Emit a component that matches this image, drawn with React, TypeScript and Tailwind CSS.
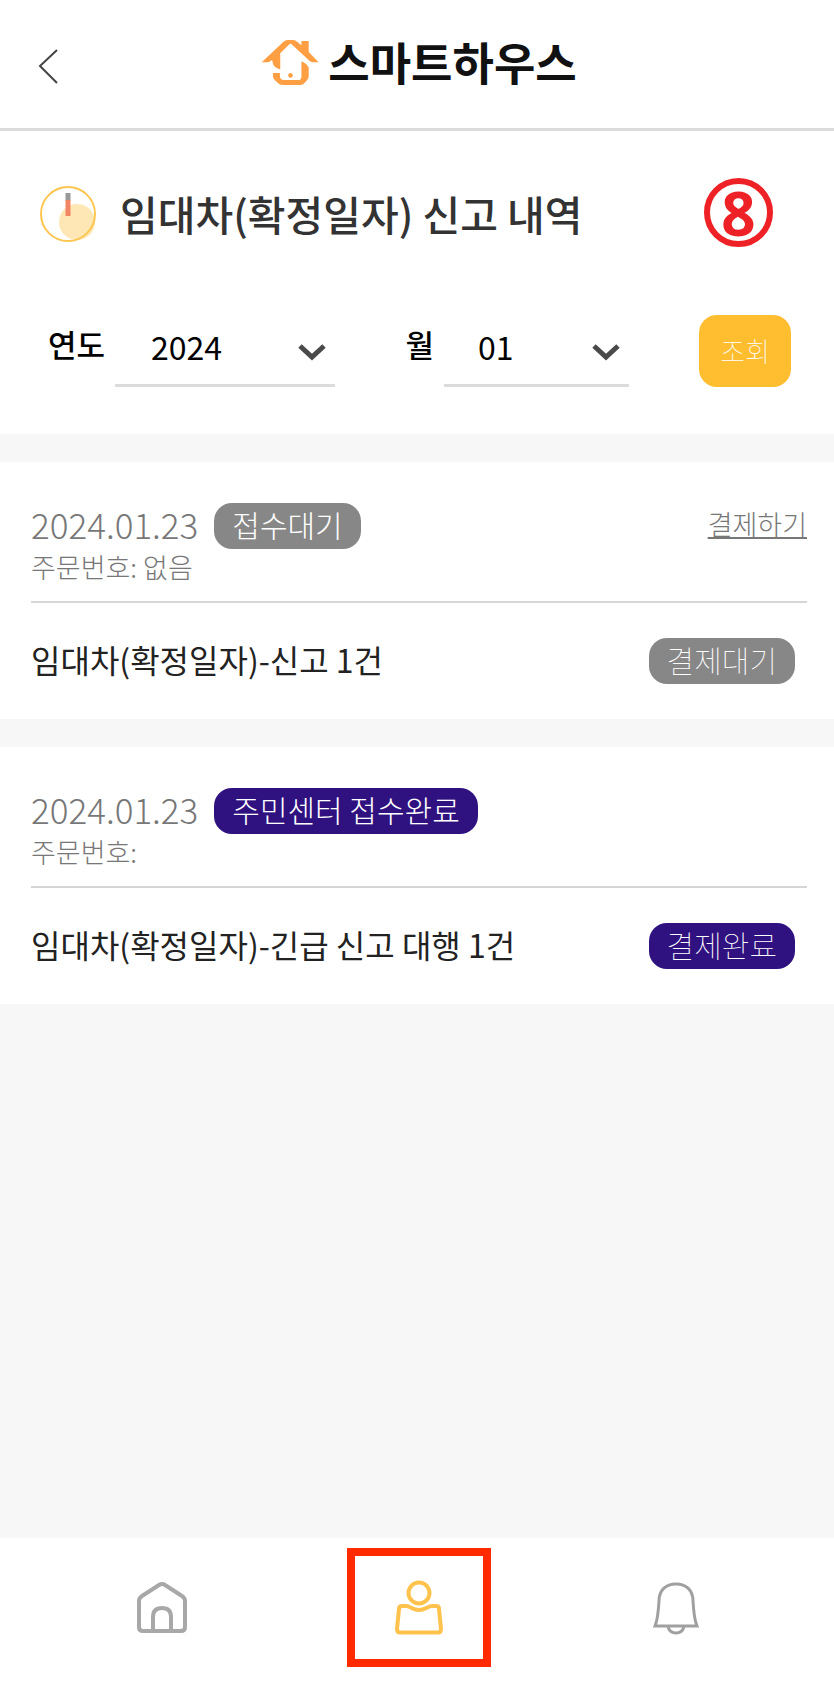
import React from "react";

type Tone = "gray" | "navy";

interface Order {
  date: string;
  status: string;
  orderNo: string;
  item: string;
  payment: string;
  tone: Tone;
  payable: boolean;
}

const orders: Order[] = [
  {
    date: "2024.01.23",
    status: "접수대기",
    orderNo: "없음",
    item: "임대차(확정일자)-신고 1건",
    payment: "결제대기",
    tone: "gray",
    payable: true,
  },
  {
    date: "2024.01.23",
    status: "주민센터 접수완료",
    orderNo: "",
    item: "임대차(확정일자)-긴급 신고 대행 1건",
    payment: "결제완료",
    tone: "navy",
    payable: false,
  },
];

const toneClass: Record<Tone, string> = {
  gray: "bg-[#878787]",
  navy: "bg-[#2f117f]",
};

function LogoMark() {
  return (
    <svg viewBox="786 118 176 142" className="h-[47px] w-[59px]" aria-hidden="true">
      <g fill="#ff9f43">
        <path d="M787 188 L852 127 Q858 121 866 121 H882 Q889 121 894 126 L907 137 V124 H929 V157 L959 188 H941 Q935 188 931 184 L879 135 Q874 130 869 135 L843 161 V210 Q822 204 820 188 Q820 182 817 182 Q811 188 803 188 Z" />
        <path d="M907 185 Q924 191 929 205 V230 Q929 238 924 243 L914 253 Q909 257 902 257 H849 Q842 257 837 252 L826 242 Q821 237 821 230 V221 H842 V229 Q842 242 855 242 H897 Q907 242 907 231 Z" />
        <circle cx="874" cy="228" r="7" />
      </g>
    </svg>
  );
}

function ClockIcon() {
  return (
    <svg viewBox="0 0 58 58" className="mt-1 h-[58px] w-[58px]" aria-hidden="true">
      <circle cx="37" cy="36" r="18" fill="#ffe7b5" />
      <circle cx="28" cy="28" r="27" fill="none" stroke="#fdc650" strokeWidth="2" />
      <path d="M28 7V15" stroke="#999" strokeWidth="5" />
      <path d="M28 14V30" stroke="#f28563" strokeWidth="5" />
    </svg>
  );
}

function Chevron() {
  return (
    <svg
      viewBox="0 0 30 20"
      className="pointer-events-none absolute right-2 top-9 h-5 w-[30px]"
      fill="none"
      stroke="#4a4a4a"
      strokeWidth="5"
      aria-hidden="true"
    >
      <path d="M3 3 L15 14 L27 3" />
    </svg>
  );
}

function Picker({ id, options, pad }: { id: string; options: string[]; pad: string }) {
  return (
    <div className="relative">
      <select
        id={id}
        className={`h-20 w-full appearance-none rounded-none border-b-3 border-[#dcdcdc] bg-transparent text-[32px] text-black outline-none ${pad}`}
      >
        {options.map((o) => (
          <option key={o}>{o}</option>
        ))}
      </select>
      <Chevron />
    </div>
  );
}

function Badge({ tone, thin, children }: { tone: Tone; thin?: boolean; children: React.ReactNode }) {
  return (
    <span
      className={`flex h-[46px] shrink-0 items-center rounded-[18px] px-[18px] pb-1 text-[30px] leading-none whitespace-nowrap text-white ${toneClass[tone]} ${thin ? "font-thin" : "font-light"}`}
    >
      {children}
    </span>
  );
}

function OrderCard({ order }: { order: Order }) {
  return (
    <article className="bg-white pr-[27px] pl-[31px]">
      <header className="border-b-2 border-[#d6d6d6] pt-[41px] pb-4">
        <div className="flex items-center">
          <time className="mr-4 pb-1 text-[35px] leading-[42px] font-light text-[#777]">{order.date}</time>
          <Badge tone={order.tone}>{order.status}</Badge>
          {order.payable && (
            <a href="#pay" className="ml-auto pb-1 text-[27px] leading-9 font-light text-[#777] underline">
              결제하기
            </a>
          )}
        </div>
        <p className="text-[27px] leading-9 font-light text-[#777]">주문번호: {order.orderNo}</p>
      </header>
      <div className="flex items-center justify-between py-[35px] pr-3">
        <h2 className="pb-1 text-[32px] leading-[42px] text-[#222]">{order.item}</h2>
        <Badge tone={order.tone} thin>
          {order.payment}
        </Badge>
      </div>
    </article>
  );
}

export default function App() {
  return (
    <div className="flex min-h-screen flex-col bg-[#f7f7f7] font-['Noto_Sans_CJK_KR',sans-serif]">
      <header className="grid grid-cols-[1fr_auto_1fr] items-center border-b-3 border-[#dcdcdc] bg-white px-9 py-[34px]">
        <button type="button" aria-label="뒤로" className="mt-1 justify-self-start">
          <svg viewBox="0 0 24 40" className="h-10 w-6" fill="none" stroke="#444" strokeWidth="2" aria-hidden="true">
            <path d="M21 4 L4 20 L21 37" />
          </svg>
        </button>
        <a href="#home" className="flex items-center gap-2 pb-1 pl-1 text-[#111]">
          <LogoMark />
          <span className="text-[45px] leading-[56px] font-bold">스마트하우스</span>
        </a>
      </header>

      <main className="flex flex-col gap-7">
        <section className="bg-white pt-[47px] pb-[47px]">
          <div className="flex items-center pr-[61px] pl-10">
            <ClockIcon />
            <h1 className="ml-[22px] text-[41px] leading-[60px] font-medium text-[#333]">임대차(확정일자) 신고 내역</h1>
            <span className="ml-auto flex size-[69px] items-center justify-center rounded-full border-6 border-[#ee2226] font-['Open_Sans',sans-serif] text-[60px] leading-none font-bold text-[#ee2226]">
              8
            </span>
          </div>
          <form
            className="mt-[60px] grid grid-cols-[auto_220fr_auto_185fr_auto] items-end pr-[43px] pl-12"
            onSubmit={(e) => e.preventDefault()}
          >
            <label htmlFor="year" className="mr-[10px] pb-5 text-[31px] leading-[46px] font-medium text-black">
              연도
            </label>
            <Picker id="year" options={["2024", "2023"]} pad="pl-9" />
            <label htmlFor="month" className="mr-[10px] ml-[70px] pb-5 text-[31px] leading-[46px] font-medium text-black">
              월
            </label>
            <Picker id="month" options={["01", "02", "03"]} pad="pl-[34px]" />
            <button
              type="submit"
              className="ml-[70px] h-[72px] rounded-[18px] bg-[#ffbd30] px-[21px] text-[27px] font-thin text-white"
            >
              조회
            </button>
          </form>
        </section>
        {orders.map((o) => (
          <OrderCard key={o.status} order={o} />
        ))}
      </main>

      <nav className="mt-auto grid grid-cols-3 justify-items-center bg-white pt-[10px] pr-[30px] pb-[25px] pl-[34px]">
        <a href="#home" aria-label="홈" className="flex h-[119px] w-36 items-center justify-center">
          <svg viewBox="0 0 52 54" className="h-[54px] w-[52px]" fill="none" stroke="#a8a8a8" strokeWidth="4" strokeLinejoin="round" aria-hidden="true">
            <path d="M3 20 Q3 17 6 15 L23 4 Q26 2 29 4 L46 15 Q49 17 49 20 V46 Q49 50 45 50 H7 Q3 50 3 46 Z" />
            <path d="M17 50 V36 Q17 27 26 27 Q35 27 35 36 V50" />
          </svg>
        </a>
        <a href="#my" aria-label="내 정보" className="flex h-[119px] w-36 items-center justify-center border-8 border-[#ff2a00]">
          <svg viewBox="0 0 50 58" className="h-[58px] w-[50px]" fill="none" stroke="#ffc34d" strokeWidth="4" strokeLinejoin="round" aria-hidden="true">
            <circle cx="25" cy="14" r="10.5" />
            <path d="M8 27 H12 C16 27 19 31 25 31 C31 31 34 27 38 27 H42 Q45 27 45 30 L47 50 Q47 53.500 44 53.500 H6 Q3 53.500 3 50 L5 30 Q5 27 8 27 Z" />
          </svg>
        </a>
        <a href="#alerts" aria-label="알림" className="flex h-[119px] w-36 items-center justify-center">
          <svg viewBox="0 0 46 54" className="h-[54px] w-[46px]" fill="none" stroke="#a0a0a0" strokeWidth="3" aria-hidden="true">
            <path d="M2 45 L3 42 Q5 36 6 20 C6 9 13 3 23 3 C33 3 40 9 40 20 Q41 36 43 42 L44 45 Z" />
            <path d="M15 46 Q17 52 23 52 Q29 52 31 46" />
          </svg>
        </a>
      </nav>
    </div>
  );
}
